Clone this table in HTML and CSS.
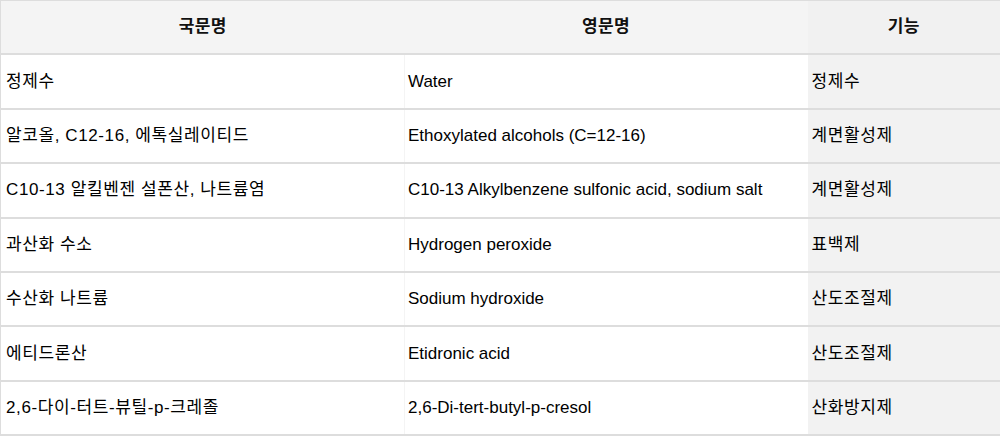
FILE: index.html
```html
<!DOCTYPE html>
<html lang="ko">
<head>
<meta charset="utf-8">
<link rel="stylesheet" href="styles.css">
</head>
<body>
<table class="ing">
  <colgroup>
    <col class="c1"><col class="c2"><col class="c3">
  </colgroup>
  <thead>
    <tr><th>국문명</th><th>영문명</th><th class="fn">기능</th></tr>
  </thead>
  <tbody>
    <tr><td>정제수</td><td class="en">Water</td><td class="fn">정제수</td></tr>
    <tr><td>알코올, C12-16, 에톡실레이티드</td><td class="en">Ethoxylated alcohols (C=12-16)</td><td class="fn">계면활성제</td></tr>
    <tr><td>C10-13 알킬벤젠 설폰산, 나트륨염</td><td class="en">C10-13 Alkylbenzene sulfonic acid, sodium salt</td><td class="fn">계면활성제</td></tr>
    <tr><td>과산화 수소</td><td class="en">Hydrogen peroxide</td><td class="fn">표백제</td></tr>
    <tr><td>수산화 나트륨</td><td class="en">Sodium hydroxide</td><td class="fn">산도조절제</td></tr>
    <tr><td>에티드론산</td><td class="en">Etidronic acid</td><td class="fn">산도조절제</td></tr>
    <tr><td>2,6-다이-터트-뷰틸-p-크레졸</td><td class="en">2,6-Di-tert-butyl-p-cresol</td><td class="fn">산화방지제</td></tr>
  </tbody>
</table>
</body>
</html>
```

FILE: styles.css
```css
html, body {
  margin: 0;
  padding: 0;
  background: #ffffff;
}
body {
  font-family: "Liberation Sans", "Noto Sans CJK KR", Arial, sans-serif;
  font-size: 17px;
  color: #000000;
}
.ing {
  width: 1000px;
  border-collapse: collapse;
  table-layout: fixed;
  border: 1px solid #dddddd;
}
.c1 { width: 404px; }
.c2 { width: 403px; }
.c3 { width: 193px; }
.ing th, .ing td {
  height: 52.4px;
  padding: 0 5px;
  border-bottom: 2px solid #dddddd;
  vertical-align: middle;
  text-align: left;
  line-height: 20px;
  letter-spacing: 0.6px;
}
.ing thead th {
  background: #f4f4f4;
  text-align: center;
  font-weight: bold;
  color: #111111;
  letter-spacing: 0.3px;
}
.ing td.en {
  border-left: 1px solid #f4f4f4;
  padding-left: 3px;
  letter-spacing: 0;
}
.ing td.fn {
  background: #f2f2f2;
  padding-left: 4px;
}
.ing thead th.fn {
  background: #f1f1f1;
}
```
